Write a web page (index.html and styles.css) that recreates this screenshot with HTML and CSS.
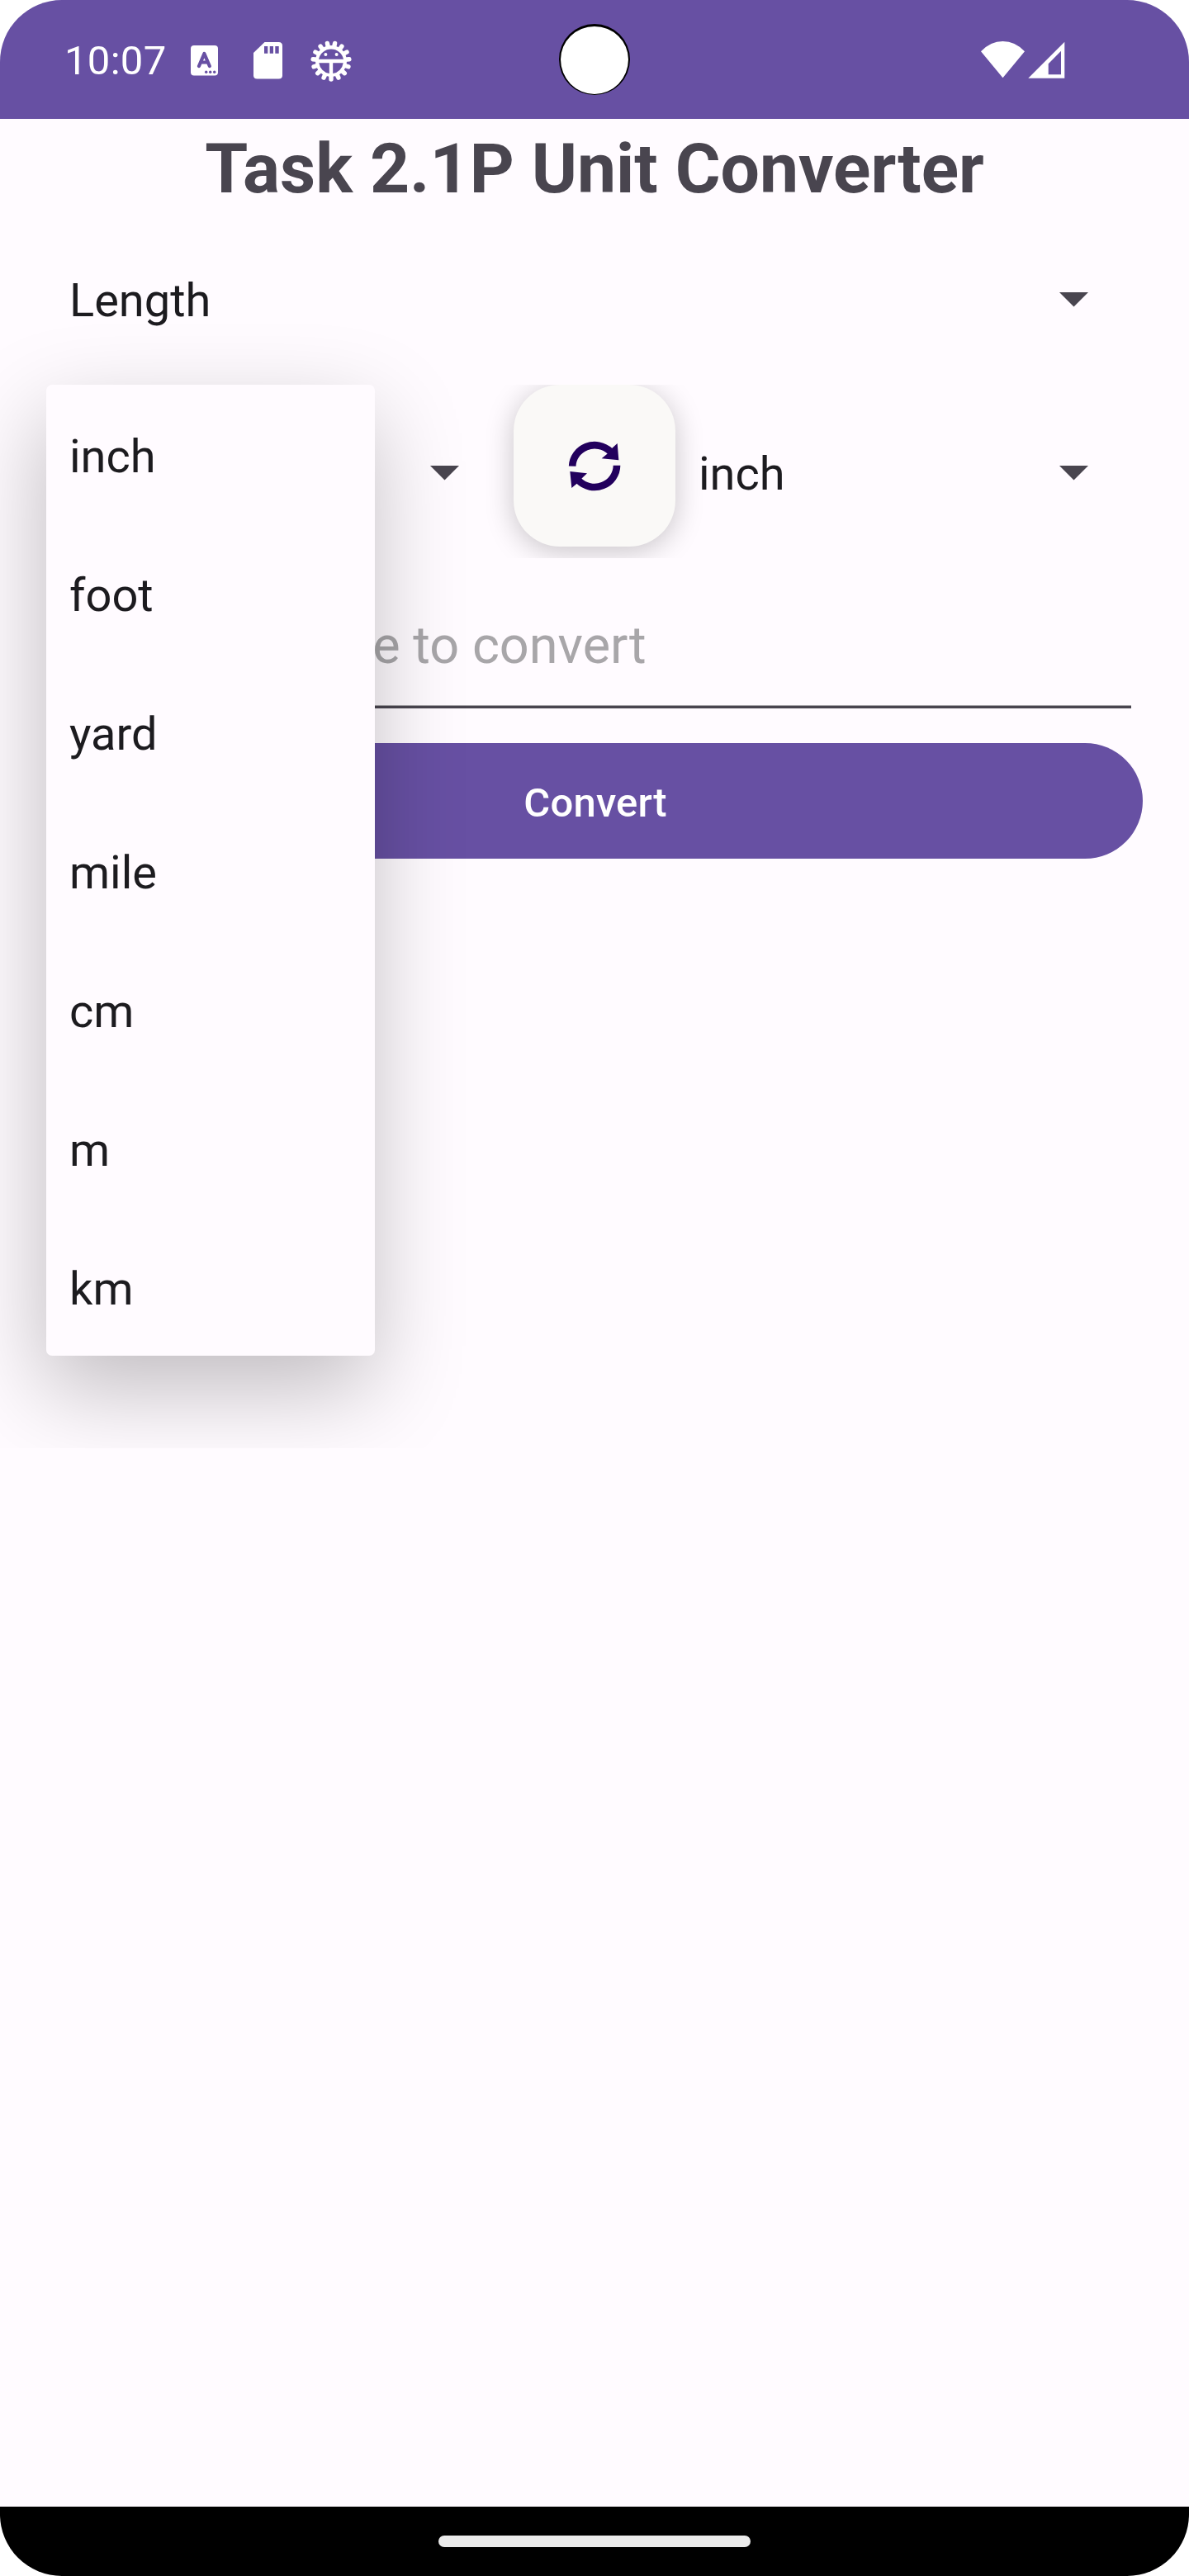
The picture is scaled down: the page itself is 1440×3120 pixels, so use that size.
FILE: index.html
```
<!DOCTYPE html>
<html lang="en">
<head>
<meta charset="utf-8">
<title>Unit Converter</title>
<link rel="stylesheet" href="styles.css">
</head>
<body>
<div class="phone">
  <header class="status">
    <span class="clock">10:07</span>
    <div class="status-left">
      <svg class="icon-lang" width="33" height="37" viewBox="0 0 33 37">
        <rect width="33" height="36.5" rx="4" fill="#fff"/>
        <path d="M10 25 L16.4 10 L22.800 25 M12.500 20.500 H20.500" fill="none" stroke="#6750a3" stroke-width="4.200" stroke-linecap="round" stroke-linejoin="round"/>
        <g fill="#6750a3"><circle cx="18.700" cy="32.300" r="1.700"/><circle cx="23.700" cy="32.300" r="1.700"/><circle cx="28.700" cy="32.300" r="1.700"/></g>
      </svg>
      <svg class="icon-sd" width="35" height="45" viewBox="0 0 35 45">
        <path d="M13.500 0 H30.500 Q35 0 35 4.500 V40.500 Q35 44.500 30.500 44.500 H4.500 Q0 44.500 0 40.500 V13 Z" fill="#fff"/>
        <path d="M13 5h4.300v8.700H13zM19.700 5H24v8.700h-4.300zM26.300 5h4.400v8.700h-4.400z" fill="#6750a3"/>
      </svg>
      <svg class="icon-bug" width="50" height="50" viewBox="-25 -25 50 50">
        <circle r="19" fill="#fff"/>
        <g stroke="#fff" stroke-width="5.400" stroke-linecap="round">
          <path d="M0 17V22"/><path d="M0 17V22" transform="rotate(24)"/><path d="M0 17V22" transform="rotate(48)"/><path d="M0 17V22" transform="rotate(72)"/><path d="M0 17V22" transform="rotate(96)"/><path d="M0 17V22" transform="rotate(120)"/><path d="M0 17V22" transform="rotate(144)"/><path d="M0 17V22" transform="rotate(168)"/><path d="M0 17V22" transform="rotate(192)"/><path d="M0 17V22" transform="rotate(216)"/><path d="M0 17V22" transform="rotate(240)"/><path d="M0 17V22" transform="rotate(264)"/><path d="M0 17V22" transform="rotate(288)"/><path d="M0 17V22" transform="rotate(312)"/><path d="M0 17V22" transform="rotate(336)"/>
        </g>
        <path d="M-15 -2.300A15.300 15.300 0 0 1 15 -2.300ZM-14.700 2.300H-2.200V15A15 15 0 0 1 -14.700 2.300ZM14.700 2.300H2.200V15A15 15 0 0 0 14.700 2.300Z" fill="#6750a3"/>
        <circle cx="-6.600" cy="-8" r="2" fill="#fff"/><circle cx="6.600" cy="-8" r="2" fill="#fff"/>
      </svg>
    </div>
    <div class="camera"></div>
    <svg class="signals" width="103" height="46" viewBox="0 0 103 46">
      <path d="M0 13.300Q11.500 1 26.500 1T53 13.300L26.500 45.300Z" fill="#fff"/>
      <path d="M101.300 1.700V45.700H57.300ZM97 12.700L81.700 28.300V41.200H97Z" fill="#fff" fill-rule="evenodd"/>
    </svg>
  </header>

  <main class="content">
    <h1 class="title">Task 2.1P Unit Converter</h1>

    <div class="spinner">
      <span>Length</span>
      <svg class="caret" width="35" height="18" viewBox="0 0 35 18"><path d="M0 0H35L17.500 17.500Z"/></svg>
    </div>

    <div class="units">
      <div class="spinner spinner-from">
        <svg class="caret" width="35" height="18" viewBox="0 0 35 18"><path d="M0 0H35L17.500 17.500Z"/></svg>
        <ul class="menu">
          <li>inch</li>
          <li>foot</li>
          <li>yard</li>
          <li>mile</li>
          <li>cm</li>
          <li>m</li>
          <li>km</li>
        </ul>
      </div>
      <button class="swap" aria-label="Swap units">
        <svg width="64" height="64" viewBox="143 95 192 192">
          <g fill="none" stroke="#22005d" stroke-width="26">
            <path d="M158.500 193A81 79 0 0 1 296 139"/>
            <path d="M320 190.500A81 79 0 0 1 181 245"/>
          </g>
          <path d="M322 110L327 171L265 165L285 148L303 127ZM150 212L212 219L194 236L174 257L156 272Z" fill="#22005d"/>
        </svg>
      </button>
      <div class="spinner spinner-to">
        <span>inch</span>
        <svg class="caret" width="35" height="18" viewBox="0 0 35 18"><path d="M0 0H35L17.500 17.500Z"/></svg>
      </div>
    </div>

    <div class="field"><span>Enter the value to convert</span></div>
    <button class="convert">Convert</button>
  </main>

  <footer class="nav"><div class="handle"></div></footer>
</div>
</body>
</html>
```
FILE: styles.css
```
* { box-sizing: border-box; }

body {
  margin: 0;
  background: #fff;
  font-family: Roboto, sans-serif;
}

.phone {
  display: flex;
  flex-direction: column;
  width: 1440px;
  height: 3120px;
  overflow: hidden;
  border-radius: 75px;
  background: #fffbff;
}

.status {
  position: relative;
  display: flex;
  align-items: center;
  height: 144px;
  padding: 0 150px 0 78px;
  background: #6750a3;
}

.clock {
  width: 153px;
  padding-top: 3px;
  color: #fff;
  font-size: 49px;
  letter-spacing: .3px;
  line-height: 58px;
}

.status-left {
  display: flex;
  align-items: center;
  flex: 1;
}

.icon-lang { margin-right: 43px; margin-top: 3px; }
.icon-sd { margin-right: 34px; margin-top: 3px; }
.icon-bug { margin-top: 3px; }

.camera {
  position: absolute;
  left: 677px;
  top: 29px;
  width: 86px;
  height: 86px;
  border: 2px solid #000;
  border-top-width: 3px;
  border-bottom-width: 1px;
  border-radius: 50%;
  background: #fff;
}

.signals { margin-right: -1px; }

.content {
  display: flex;
  flex: 1;
  flex-direction: column;
  padding: 0 56px;
}

.title {
  height: 112px;
  margin: 0;
  padding-top: 12px;
  color: #49454f;
  font-size: 84px;
  font-weight: 700;
  line-height: 98px;
  text-align: center;
  white-space: nowrap;
}

.spinner {
  display: flex;
  align-items: center;
  justify-content: space-between;
  height: 210px;
  padding: 0 66px 0 28px;
  color: #1c1b1f;
  font-size: 56px;
  line-height: 66px;
}

.spinner span { padding-top: 6px; }
.caret { margin-top: 3px; fill: #49454f; }

.units { display: flex; }
.spinner-from {
  position: relative;
  justify-content: flex-end;
  width: 566px;
}
.spinner-to { flex: 1; }

.menu {
  position: absolute;
  z-index: 2;
  left: 0;
  top: 0;
  width: 398px;
  margin: 0;
  padding: 0;
  border-radius: 7px;
  background: #fffbff;
  box-shadow: -4px 40px 110px rgba(0, 0, 0, .25);
  clip-path: inset(-120px -120px -112px -120px);
  list-style: none;
}

.menu li {
  display: flex;
  align-items: center;
  height: 168px;
  padding: 6px 28px 0;
}

.swap {
  display: flex;
  align-items: center;
  justify-content: center;
  width: 196px;
  height: 196px;
  padding: 0;
  border: 0;
  border-radius: 56px;
  background: #faf9f7;
  box-shadow: 0 6px 34px rgba(0, 0, 0, .22);
  clip-path: inset(0 -40px -14px -40px);
}

.field {
  height: 182px;
  margin: 0 14px;
  padding: 69px 0 0 1px;
  border-bottom: 3px solid #49454f;
  box-shadow: inset 0 -1px #a5a3a7;
  color: #a8a6a9;
  font-size: 63px;
  line-height: 74px;
}

.convert {
  height: 140px;
  margin-top: 42px;
  padding: 5px 0 0 2px;
  border: 0;
  border-radius: 70px;
  background: #6750a3;
  color: #fff;
  font-family: inherit;
  font-size: 49px;
  font-weight: 500;
  letter-spacing: .2px;
  line-height: 58px;
}

.nav {
  display: flex;
  align-items: center;
  justify-content: center;
  height: 84px;
  background: #000;
}

.handle {
  width: 378px;
  height: 14px;
  border-radius: 7px;
  background: #ebebeb;
}
```
